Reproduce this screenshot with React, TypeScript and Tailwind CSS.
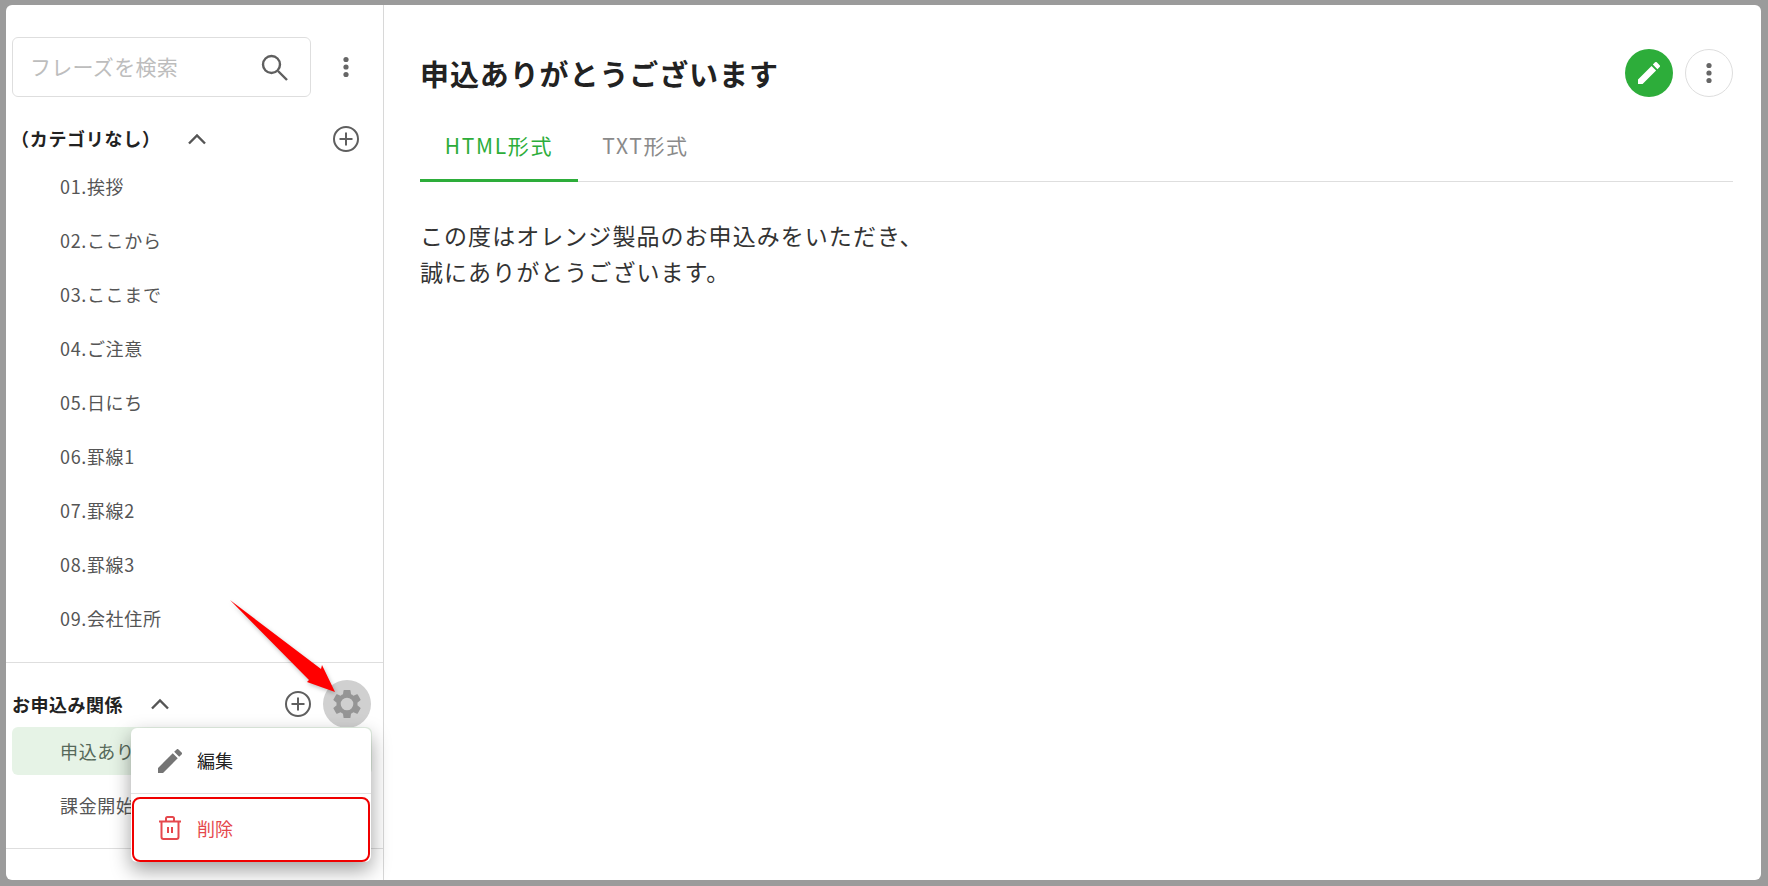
import React from "react";

const font = { fontFamily: '"Noto Sans CJK JP", "Noto Sans", sans-serif' };

const Kebab = ({ className = "" }: { className?: string }) => (
  <svg width="8" height="22" viewBox="0 0 8 22" className={className}>
    <circle cx="4" cy="3.5" r="2.6" fill="#666" />
    <circle cx="4" cy="11" r="2.6" fill="#666" />
    <circle cx="4" cy="18.5" r="2.6" fill="#666" />
  </svg>
);

const Plus = () => (
  <svg width="28" height="28" viewBox="0 0 28 28" fill="none" stroke="#5f5f5f" strokeWidth="2">
    <circle cx="14" cy="14" r="12" />
    <path d="M14 7.5v13M7.5 14h13" />
  </svg>
);

const Chevron = () => (
  <svg width="20" height="12" viewBox="0 0 20 12" fill="none" stroke="#555" strokeWidth="2.4">
    <path d="M2 10.5 10 2.5l8 8" />
  </svg>
);

const Pencil = ({ size, color }: { size: number; color: string }) => (
  <svg width={size} height={size} viewBox="3 3 18 18" fill={color}>
    <path d="M3 17.25V21h3.75L17.81 9.94l-3.75-3.75L3 17.25zM20.71 7.04a1 1 0 0 0 0-1.41l-2.34-2.34a1 1 0 0 0-1.41 0l-1.83 1.83 3.75 3.75 1.83-1.83z" />
  </svg>
);

const Gear = () => (
  <svg width="28" height="28" viewBox="2 2 20 20" fill="#959595" fillRule="evenodd">
    <path d="M19.43 12.98c.04-.32.07-.64.07-.98s-.03-.66-.07-.98l2.11-1.65a.5.5 0 0 0 .12-.64l-2-3.46a.5.5 0 0 0-.61-.22l-2.49 1a7.3 7.3 0 0 0-1.69-.98l-.38-2.65A.49.49 0 0 0 14 2h-4a.49.49 0 0 0-.49.42l-.38 2.65c-.61.25-1.17.59-1.69.98l-2.49-1a.49.49 0 0 0-.61.22l-2 3.46a.49.49 0 0 0 .12.64l2.11 1.65c-.04.32-.07.65-.07.98s.03.66.07.98l-2.11 1.65a.5.5 0 0 0-.12.64l2 3.46c.12.22.39.3.61.22l2.49-1c.52.4 1.08.73 1.69.98l.38 2.65c.03.24.24.42.49.42h4c.25 0 .46-.18.49-.42l.38-2.65c.61-.25 1.17-.59 1.69-.98l2.49 1c.23.09.49 0 .61-.22l2-3.46a.5.5 0 0 0-.12-.64l-2.11-1.65zM12 16.500a4.500 4.500 0 1 1 0-9 4.500 4.500 0 0 1 0 9z" />
  </svg>
);

const Row = ({ text }: { text: string }) => (
  <div className="flex h-[54px] items-center pl-[54px] text-[18px] tracking-[0.65px] text-[#555]">{text}</div>
);

const items = ["01.挨拶", "02.ここから", "03.ここまで", "04.ご注意", "05.日にち", "06.罫線1", "07.罫線2", "08.罫線3", "09.会社住所"];

export default function App() {
  return (
    <div style={font} className="h-[886px] w-[1768px] bg-[#9b9b9b] pb-[6px] pl-[6px] pr-[7px] pt-[5px]">
      <div className="relative flex h-full overflow-hidden rounded-[6px] bg-white">
        <aside className="flex w-[378px] shrink-0 flex-col border-r border-[#d8d8d8]">
          <div className="flex items-center pl-[6px] pt-[32px]">
            <div className="flex h-[60px] w-[299px] items-center justify-between rounded-[6px] border border-[#dedede] pl-[17px] pr-[22px]">
              <span className="text-[21px] tracking-[0.3px] text-[#bdbdbd]">フレーズを検索</span>
              <svg width="28" height="28" viewBox="0 0 28 28" fill="none" stroke="#5f5f5f" strokeWidth="2.4">
                <circle cx="11.5" cy="11.5" r="8.5" />
                <path d="m18 18 9 9" />
              </svg>
            </div>
            <Kebab className="ml-[31px]" />
          </div>
          <div className="mt-[12px] flex h-[48px] items-center pl-[5px] pt-[11px]">
            <span className="w-[176px] text-[18px] font-bold tracking-[0.7px] text-[#222]">（カテゴリなし）</span>
            <Chevron />
            <span className="ml-auto mr-[23px] flex"><Plus /></span>
          </div>
          <div className="border-b border-[#dedede] pb-[17px]">
            <div className="mt-[2px]">
              {items.map((t) => (
                <Row key={t} text={t} />
              ))}
            </div>
          </div>
          <div className="flex h-[64px] items-center pl-[6px] pr-[12px] pt-[18px]">
            <span className="text-[18px] font-bold tracking-[0.5px] text-[#222]">お申込み関係</span>
            <span className="ml-[27px] flex"><Chevron /></span>
            <span className="ml-auto mr-[11px] flex"><Plus /></span>
            <span className="flex h-[48px] w-[48px] items-center justify-center rounded-full bg-[#d0d0d0]"><Gear /></span>
          </div>
          <div className="border-b border-[#dedede] pb-[13px]">
            <div className="ml-[6px] mr-[11px] flex h-[48px] items-center rounded-[6px] bg-[#e6f3e6] pl-[48px] text-[18px] tracking-[0.65px] text-[#56695a]">
              申込ありがとうございます
            </div>
            <div className="flex h-[60px] items-center pl-[54px] text-[18px] tracking-[0.65px] text-[#555]">課金開始のご案内</div>
          </div>
        </aside>

        <main className="flex min-w-0 flex-1 flex-col pl-[36px] pr-[28px]">
          <div className="flex items-center justify-between pt-[43px]">
            <h1 className="text-[29px] font-bold leading-[50px] tracking-[0.9px] text-[#222]">申込ありがとうございます</h1>
            <div className="flex gap-[12px]">
              <span className="flex h-[48px] w-[48px] items-center justify-center rounded-full bg-[#2dad3a]">
                <Pencil size={22} color="#ffffff" />
              </span>
              <span className="flex h-[48px] w-[48px] items-center justify-center rounded-full border border-[#dedede]">
                <Kebab />
              </span>
            </div>
          </div>
          <div className="mt-[5px] flex h-[79px] border-b border-[#dedede] pt-[10px]">
            <div className="-mb-[1px] flex w-[158px] items-center justify-center border-b-[3px] border-[#2dad3a] text-[21px] tracking-[1.7px] text-[#2dad3a]">HTML形式</div>
            <div className="flex w-[135px] items-center justify-center pb-[2px] text-[21px] tracking-[1.6px] text-[#8a8a8a]">TXT形式</div>
          </div>
          <div className="mt-[35px] text-[23px] leading-[36px] tracking-[1.05px] text-[#333]">
            <p>この度はオレンジ製品のお申込みをいただき、</p>
            <p>誠にありがとうございます。</p>
          </div>
        </main>

        <div className="absolute left-[125px] top-[723px] h-[134px] w-[240px] rounded-[6px] bg-white shadow-[0_8px_20px_rgba(0,0,0,0.38)]">
          <div className="flex h-[66px] items-center border-b border-[#e2e2e2] pl-[27px] text-[18px] text-[#222]">
            <Pencil size={24} color="#757575" />
            <span className="ml-[15px]">編集</span>
          </div>
          <div className="flex h-[68px] items-center pl-[27px] text-[18px] text-[#e5484d]">
            <svg width="24" height="24" viewBox="0 0 24 24" fill="none" stroke="#e5484d" strokeWidth="2">
              <path d="M1 5.500h22M3.500 5.500V21a2 2 0 0 0 2 2h13a2 2 0 0 0 2-2V5.500M8 5.500V2.500a1.500 1.500 0 0 1 1.500-1.500h5a1.500 1.500 0 0 1 1.500 1.500v3M10 11v6M14 11v6" />
            </svg>
            <span className="ml-[15px]">削除</span>
          </div>
          <div className="absolute left-[1px] top-[69px] h-[65px] w-[238px] rounded-[8px] border-2 border-[#f00000]" />
        </div>

        <svg className="absolute left-[224px] top-[590px] z-20 drop-shadow-[1px_2px_2px_rgba(0,0,0,0.25)]" width="115" height="105" viewBox="0 0 115 105">
          <path d="M0 5 L91 74 L92 70 L105 97 L77 87 L79 85 Z" fill="#ff0000" />
        </svg>
      </div>
    </div>
  );
}
